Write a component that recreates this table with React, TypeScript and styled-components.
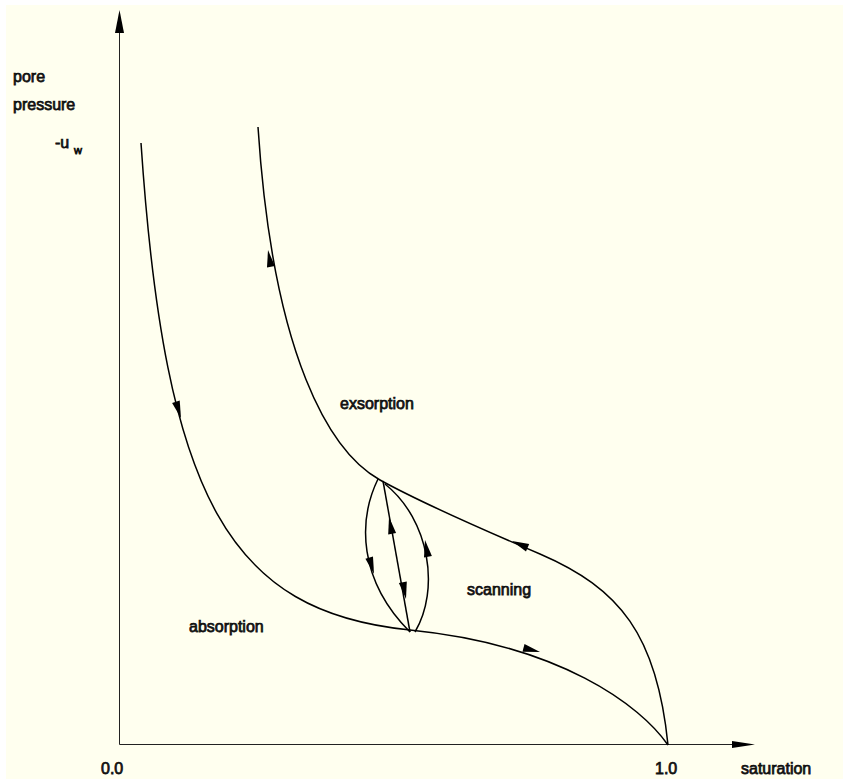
import React from "react";
import styled, { createGlobalStyle } from "styled-components";

type Pt = [number, number];

const GlobalStyle = createGlobalStyle`
  html, body {
    margin: 0;
    padding: 0;
    background: #ffffff;
  }
`;

// hand fitted beziers, page pixel coordinates
const ABSORPTION =
  "M141,143 C165,500 230,612 410,630 C560,645 640,705 668,745";

const EXSORPTION =
  "M258,127 C273,357 330,452 380,480 C420,502 500,537 540,554 C620,588.5 657,635 668,745";

const SCANNING = [
  "M378,479 C358,520 358,580 410,632",
  "M383,481 L410,632",
  "M385,484 C430,520 440,590 415,632",
];

interface IHead {
  tip: Pt;
  from: Pt;
  len?: number;
  half?: number;
}

const HEADS: IHead[] = [
  { tip: [181, 418], from: [176, 402] },
  { tip: [268, 250], from: [271, 267] },
  { tip: [512, 541], from: [528, 548] },
  { tip: [540, 652], from: [520, 647] },
  { tip: [374, 574], from: [369, 557] },
  { tip: [389, 517], from: [392, 533] },
  { tip: [406, 599], from: [403, 583] },
  { tip: [425, 540], from: [428, 557] },
];

const headPoints = ({ tip, from, len = 17, half = 4 }: IHead) => {
  const dx = tip[0] - from[0];
  const dy = tip[1] - from[1];
  const l = Math.hypot(dx, dy) || 1;
  const ux = dx / l;
  const uy = dy / l;
  const bx = tip[0] - ux * len;
  const by = tip[1] - uy * len;
  const px = -uy * half;
  const py = ux * half;
  return `${tip[0]},${tip[1]} ${(bx + px).toFixed(1)},${(by + py).toFixed(1)} ${(bx - px).toFixed(1)},${(by - py).toFixed(1)}`;
};

const Arrow = (props: IHead) => <Head points={headPoints(props)} />;

const App = () => {
  return (
    <Page>
      <GlobalStyle />
      <Canvas>
        <Chart width={837} height={774} viewBox="6 5 837 774">
          <Axis x1={119.5} y1={28} x2={119.5} y2={744.5} />
          <Axis x1={119.5} y1={744.5} x2={736} y2={744.5} />
          <Arrow tip={[119.5, 10]} from={[119.5, 33]} len={23} half={4.5} />
          <Arrow tip={[755, 744.5]} from={[732, 744.5]} len={23} half={3.6} />

          <Curve d={ABSORPTION} />
          <Curve d={EXSORPTION} />
          {SCANNING.map((d) => (
            <Curve key={d} d={d} />
          ))}
          {HEADS.map((h, i) => (
            <Arrow key={i} {...h} />
          ))}

          <Label x={13} y={82}>pore</Label>
          <Label x={13} y={110}>pressure</Label>
          <Label x={55} y={148}>
            -u
            <tspan x={74} y={154} fontSize={11}>
              w
            </tspan>
          </Label>

          <Label x={340} y={408.5}>exsorption</Label>
          <Label x={467} y={595}>scanning</Label>
          <Label x={189} y={632}>absorption</Label>

          <Label x={101} y={774}>0.0</Label>
          <Label x={655} y={773.5}>1.0</Label>
          <Label x={741} y={773.5}>saturation</Label>
        </Chart>
      </Canvas>
    </Page>
  );
};

export default App;

const Page = styled.div`
  padding: 5px 0 0 6px;
  width: 843px;
  height: 779px;
  box-sizing: border-box;
  overflow: hidden;
`;

const Canvas = styled.figure`
  margin: 0;
  width: 837px;
  height: 774px;
  background: #ffffef;
`;

const Chart = styled.svg`
  display: block;
`;

const Axis = styled.line`
  stroke: #222;
  stroke-width: 1;
`;

const Curve = styled.path`
  fill: none;
  stroke: #000;
  stroke-width: 1.5;
`;

const Head = styled.polygon`
  fill: #000;
`;

const Label = styled.text`
  font-family: "Liberation Sans", Arial, Helvetica, sans-serif;
  font-size: 16px;
  fill: #111;
  stroke: #111;
  stroke-width: 0.75px;
`;
